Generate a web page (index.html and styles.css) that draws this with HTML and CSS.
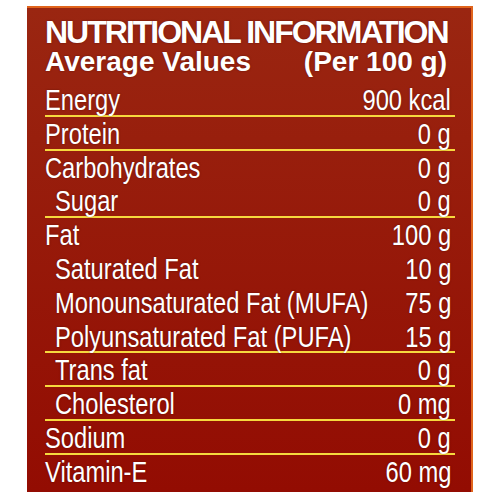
FILE: index.html
```html
<!DOCTYPE html>
<html lang="en">

  <head>
    <meta charset="UTF-8">
    <meta name="viewport" content="width=device-width, initial-scale=1.0">
    <title>Nutritional Information</title>
    <link rel="stylesheet" href="styles.css">
  </head>

  <body>
    <div class="panel">
      <div class="head">
        <h1 class="title">NUTRITIONAL INFORMATION</h1>
        <div class="sub">
          <span>Average Values</span>
          <span>(Per 100 g)</span>
        </div>
      </div>
      <ul class="list">
        <li class="row sep"><span class="name">Energy</span><span class="val">900 kcal</span></li>
        <li class="row sep"><span class="name">Protein</span><span class="val">0 g</span></li>
        <li class="row"><span class="name">Carbohydrates</span><span class="val">0 g</span></li>
        <li class="row sep sub-item"><span class="name">Sugar</span><span class="val">0 g</span></li>
        <li class="row"><span class="name">Fat</span><span class="val">100 g</span></li>
        <li class="row sub-item"><span class="name">Saturated Fat</span><span class="val">10 g</span></li>
        <li class="row sub-item"><span class="name">Monounsaturated Fat (MUFA)</span><span class="val">75 g</span></li>
        <li class="row sep sub-item"><span class="name">Polyunsaturated Fat (PUFA)</span><span class="val">15 g</span></li>
        <li class="row sep sub-item"><span class="name">Trans fat</span><span class="val">0 g</span></li>
        <li class="row sep sub-item"><span class="name">Cholesterol</span><span class="val">0 mg</span></li>
        <li class="row sep"><span class="name">Sodium</span><span class="val">0 g</span></li>
        <li class="row"><span class="name">Vitamin-E</span><span class="val">60 mg</span></li>
      </ul>
    </div>
  </body>

</html>
```

FILE: styles.css
```css
* {
  padding: 0;
  margin: 0;
}

ul {
  list-style: none;
}

body {
  background: #fff;
  padding: 6px 0 0 27px;
}

.panel {
  width: 446px;
  height: 486px;
  box-sizing: border-box;
  padding: 9px 18px 0 18px;
  border-top: 2px solid #e0641c;
  border-right: 2px solid #e0641c;
  background: linear-gradient(#9a2611, #930c02);
  color: #fff;
  text-shadow: 0 0 2px rgba(40, 0, 0, .5);
}

.title {
  font-family: "Liberation Sans", Arial, sans-serif;
  font-weight: bold;
  font-size: 32px;
  line-height: 31px;
  letter-spacing: -2px;
}

.sub {
  display: flex;
  justify-content: space-between;
  width: 402px;
  font-family: "Liberation Sans", Arial, sans-serif;
  font-weight: bold;
  font-size: 28px;
  line-height: 28px;
}

.list {
  margin-top: 7px;
  width: 410px;
  font-family: "Liberation Sans", Arial, sans-serif;
  font-size: 30px;
}

.row {
  display: flex;
  justify-content: space-between;
  height: 33.8px;
  line-height: 34.8px;
  padding-right: 4px;
  white-space: nowrap;
}

/* the label font on the pack is a narrow one */
.row .name,
.row .val {
  display: inline-block;
  transform: scaleX(.79);
}

.row .name {
  flex: 1 1 0;
  min-width: 0;
  transform-origin: left center;
}

.row .val {
  flex-shrink: 0;
  transform-origin: right center;
}

.sub-item {
  padding-left: 10px;
}

.sep {
  background: linear-gradient(#f6d93e, #f6d93e) left bottom / 100% 2px no-repeat;
}
```
